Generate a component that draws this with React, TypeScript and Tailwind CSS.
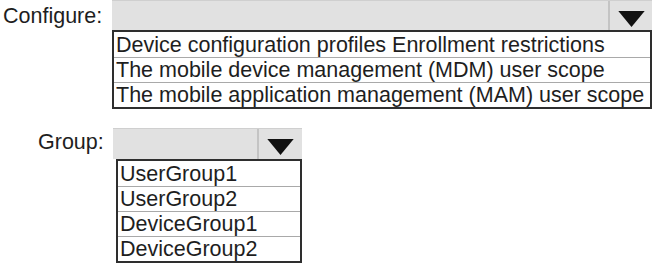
import React from 'react';

type DropdownProps = {
    selectWidth: string;
    listClass: string;
    arrowClass: string;
    options: string[];
    rowClass: string;
};

const Arrow: React.FC<{ className: string }> = ({ className }) => (
    <svg viewBox="0 0 28 17" className={className}>
        <polygon points="0,0 28,0 14,17" fill="#111" />
    </svg>
);

const Dropdown: React.FC<DropdownProps> = ({ selectWidth, listClass, arrowClass, options, rowClass }) => (
    <div className={`flex flex-col ${selectWidth}`}>
        <div className="flex h-[31px] bg-[#e1e1e1] border-t border-[#cfcfcf]">
            <div className="flex-1" />
            <div className={`flex items-center justify-center border-l-2 border-[#c4c4c4] ${arrowClass}`}>
                <Arrow className="w-[27px] h-[16px] mt-[6px]" />
            </div>
        </div>
        <div className={`border-2 border-[#2e2e2e] bg-white ${listClass}`}>
            {options.map((opt, i) => (
                <div
                    key={opt}
                    className={`px-[2px] leading-none flex items-center whitespace-nowrap ${rowClass} ${i > 0 ? 'border-t border-[#a9a9a9]' : ''}`}
                >
                    {opt}
                </div>
            ))}
        </div>
    </div>
);

export default function App() {
    return (
        <div className="w-[654px] h-[263px] bg-white text-[#1e1e1e] text-[21.5px] font-['Liberation_Sans',Arial,sans-serif] overflow-hidden">
            <div className="flex">
                <div className="w-[112px] pl-[3px] pt-[6px] leading-none">Configure:</div>
                <Dropdown
                    selectWidth="w-[540px]"
                    listClass="w-[540px] -mt-[1px]"
                    arrowClass="w-[44px]"
                    rowClass="h-[25px] pt-[2px]"
                    options={[
                        'Device configuration profiles Enrollment restrictions',
                        'The mobile device management (MDM) user scope',
                        'The mobile application management (MAM) user scope',
                    ]}
                />
            </div>
            <div className="flex mt-[19px]">
                <div className="w-[113px] pl-[38px] pt-[4px] leading-none">Group:</div>
                <Dropdown
                    selectWidth="w-[189px]"
                    listClass="w-[186px] ml-[3px]"
                    arrowClass="w-[45px]"
                    rowClass="h-[25px] pt-[2px]"
                    options={['UserGroup1', 'UserGroup2', 'DeviceGroup1', 'DeviceGroup2']}
                />
            </div>
        </div>
    );
}
